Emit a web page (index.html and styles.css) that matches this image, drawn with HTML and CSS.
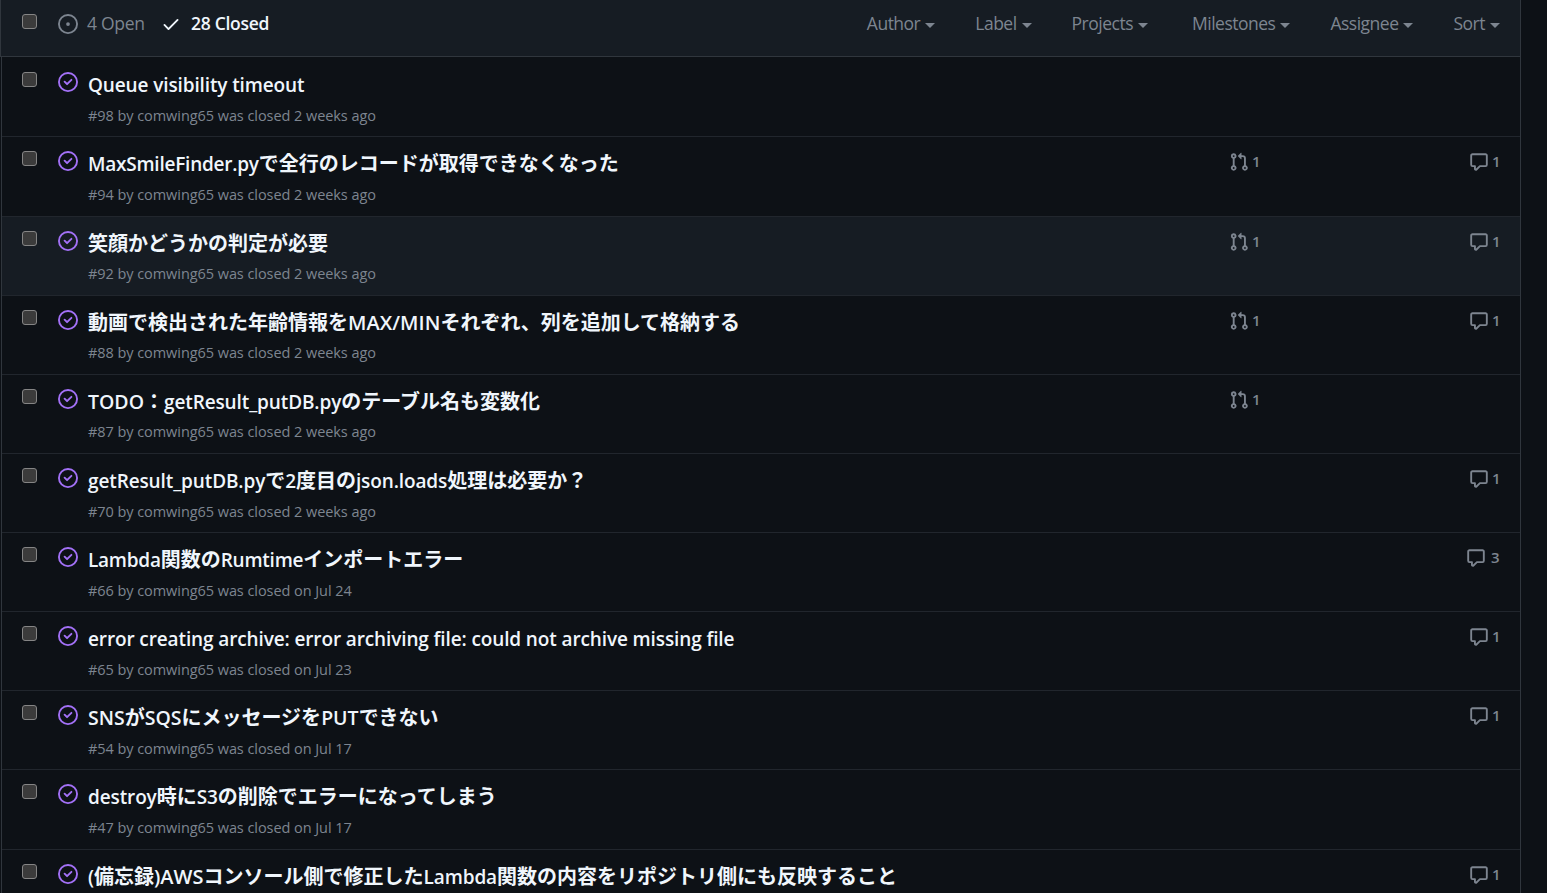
FILE: index.html
```html
<!DOCTYPE html>
<html lang="ja">
  <head>
    <meta charset="UTF-8" />
    <meta name="viewport" content="width=device-width, initial-scale=1.0" />
    <title>Issues</title>
    <link rel="stylesheet" href="styles.css">
  </head>
  <body>
    <!-- icons -->
    <svg class="sprite" width="0" height="0">
      <symbol id="open" viewBox="0 0 16 16">
        <path d="M8 9.5a1.5 1.5 0 100-3 1.5 1.5 0 000 3z" />
        <path fill-rule="evenodd" d="M8 0a8 8 0 100 16A8 8 0 008 0zM1.5 8a6.5 6.5 0 1113 0 6.5 6.5 0 01-13 0z" />
      </symbol>
      <symbol id="check" viewBox="0 0 16 16">
        <path fill-rule="evenodd" d="M13.78 4.22a.75.75 0 010 1.06l-7.25 7.25a.75.75 0 01-1.06 0L2.22 9.28a.75.75 0 011.06-1.06L6 10.94l6.72-6.72a.75.75 0 011.06 0z" />
      </symbol>
      <symbol id="closed" viewBox="0 0 16 16">
        <path d="M11.28 6.78a.75.75 0 00-1.06-1.06L7.25 8.69 5.78 7.22a.75.75 0 00-1.06 1.06l2 2a.75.75 0 001.06 0l3.5-3.5z" />
        <path fill-rule="evenodd" d="M16 8A8 8 0 110 8a8 8 0 0116 0zm-1.5 0a6.5 6.5 0 11-13 0 6.5 6.5 0 0113 0z" />
      </symbol>
      <symbol id="pull" viewBox="0 0 16 16">
        <path fill-rule="evenodd" d="M7.177 3.073L9.573.677A.25.25 0 0110 .854v4.792a.25.25 0 01-.427.177L7.177 3.427a.25.25 0 010-.354zM3.75 2.5a.75.75 0 100 1.5.75.75 0 000-1.5zm-2.25.75a2.25 2.25 0 113 2.122v5.256a2.251 2.251 0 11-1.5 0V5.372A2.25 2.25 0 011.5 3.25zM11 2.5h-1V4h1a1 1 0 011 1v5.628a2.251 2.251 0 101.5 0V5A2.5 2.5 0 0011 2.5zm1 10.25a.75.75 0 111.5 0 .75.75 0 01-1.5 0zM3.75 12a.75.75 0 100 1.5.75.75 0 000-1.5z" />
      </symbol>
      <symbol id="comment" viewBox="0 0 16 16">
        <path fill-rule="evenodd" d="M2.75 2.5a.25.25 0 00-.25.25v7.5c0 .138.112.25.25.25h2a.75.75 0 01.75.75v2.19l2.72-2.72a.75.75 0 01.53-.22h4.5a.25.25 0 00.25-.25v-7.5a.25.25 0 00-.25-.25H2.75zM1 2.75C1 1.784 1.784 1 2.75 1h10.5c.966 0 1.75.784 1.75 1.75v7.5A1.75 1.75 0 0113.25 12H9.06l-2.573 2.573A1.457 1.457 0 014 13.543V12H2.75A1.75 1.75 0 011 10.25v-7.5z" />
      </symbol>
    </svg>

    <div class="issues">
      <div class="header">
        <span class="checkbox"></span>
        <a class="state"><svg class="icon"><use href="#open" /></svg><span class="count-open">4 Open</span></a>
        <a class="state selected"><svg class="icon"><use href="#check" /></svg><span class="count-closed">28 Closed</span></a>
        <div class="filters">
          <span class="filter">Author</span>
          <span class="filter">Label</span>
          <span class="filter">Projects</span>
          <span class="filter milestones">Milestones</span>
          <span class="filter">Assignee</span>
          <span class="filter">Sort</span>
        </div>
      </div>

      <div class="row">
        <span class="checkbox"></span>
        <svg class="icon closed"><use href="#closed" /></svg>
        <div class="content">
          <div class="title"><span class="en">Queue visibility timeout</span></div>
          <div class="meta">#98 by comwing65 was closed 2 weeks ago</div>
        </div>
      </div>

      <div class="row">
        <span class="checkbox"></span>
        <svg class="icon closed"><use href="#closed" /></svg>
        <div class="content">
          <div class="title"><span class="en tight">MaxSmileFinder.py</span>で全行のレコードが取得できなくなった</div>
          <div class="meta">#94 by comwing65 was closed 2 weeks ago</div>
        </div>
        <div class="pulls"><svg class="icon"><use href="#pull" /></svg>1</div>
        <div class="comments"><svg class="icon"><use href="#comment" /></svg>1</div>
      </div>

      <div class="row active">
        <span class="checkbox"></span>
        <svg class="icon closed"><use href="#closed" /></svg>
        <div class="content">
          <div class="title">笑顔かどうかの判定が必要</div>
          <div class="meta">#92 by comwing65 was closed 2 weeks ago</div>
        </div>
        <div class="pulls"><svg class="icon"><use href="#pull" /></svg>1</div>
        <div class="comments"><svg class="icon"><use href="#comment" /></svg>1</div>
      </div>

      <div class="row">
        <span class="checkbox"></span>
        <svg class="icon closed"><use href="#closed" /></svg>
        <div class="content">
          <div class="title">動画で検出された年齢情報を<span class="en caps-wide">MAX/MIN</span>それぞれ、列を追加して格納する</div>
          <div class="meta">#88 by comwing65 was closed 2 weeks ago</div>
        </div>
        <div class="pulls"><svg class="icon"><use href="#pull" /></svg>1</div>
        <div class="comments"><svg class="icon"><use href="#comment" /></svg>1</div>
      </div>

      <div class="row">
        <span class="checkbox"></span>
        <svg class="icon closed"><use href="#closed" /></svg>
        <div class="content">
          <div class="title"><span class="en caps">TODO</span>：<span class="en">getResult_putDB.py</span>のテーブル名も変数化</div>
          <div class="meta">#87 by comwing65 was closed 2 weeks ago</div>
        </div>
        <div class="pulls"><svg class="icon"><use href="#pull" /></svg>1</div>
        <div class="comments"></div>
      </div>

      <div class="row">
        <span class="checkbox"></span>
        <svg class="icon closed"><use href="#closed" /></svg>
        <div class="content">
          <div class="title"><span class="en">getResult_putDB.py</span>で<span class="en">2</span>度目の<span class="en">json.loads</span>処理は必要か？</div>
          <div class="meta">#70 by comwing65 was closed 2 weeks ago</div>
        </div>
        <div class="comments"><svg class="icon"><use href="#comment" /></svg>1</div>
      </div>

      <div class="row">
        <span class="checkbox"></span>
        <svg class="icon closed"><use href="#closed" /></svg>
        <div class="content">
          <div class="title"><span class="en tight">Lambda</span>関数の<span class="en tight">Rumtime</span>インポートエラー</div>
          <div class="meta">#66 by comwing65 was closed on Jul 24</div>
        </div>
        <div class="comments wide"><svg class="icon"><use href="#comment" /></svg>3</div>
      </div>

      <div class="row">
        <span class="checkbox"></span>
        <svg class="icon closed"><use href="#closed" /></svg>
        <div class="content">
          <div class="title"><span class="en">error creating archive: error archiving file: could not archive missing file</span></div>
          <div class="meta">#65 by comwing65 was closed on Jul 23</div>
        </div>
        <div class="comments"><svg class="icon"><use href="#comment" /></svg>1</div>
      </div>

      <div class="row">
        <span class="checkbox"></span>
        <svg class="icon closed"><use href="#closed" /></svg>
        <div class="content">
          <div class="title"><span class="en caps">SNS</span>が<span class="en caps">SQS</span>にメッセージを<span class="en caps">PUT</span>できない</div>
          <div class="meta">#54 by comwing65 was closed on Jul 17</div>
        </div>
        <div class="comments"><svg class="icon"><use href="#comment" /></svg>1</div>
      </div>

      <div class="row">
        <span class="checkbox"></span>
        <svg class="icon closed"><use href="#closed" /></svg>
        <div class="content">
          <div class="title"><span class="en">destroy</span>時に<span class="en">S3</span>の削除でエラーになってしまう</div>
          <div class="meta">#47 by comwing65 was closed on Jul 17</div>
        </div>
      </div>

      <div class="row">
        <span class="checkbox"></span>
        <svg class="icon closed"><use href="#closed" /></svg>
        <div class="content">
          <div class="title"><span class="en">(</span>備忘録<span class="en caps-wide">)AWS</span>コンソール側で修正した<span class="en">Lambda</span>関数の内容をリポジトリ側にも反映すること</div>
        </div>
        <div class="comments"><svg class="icon"><use href="#comment" /></svg>1</div>
      </div>
    </div>
  </body>
</html>
```
FILE: styles.css
```css
* {
  box-sizing: border-box;
}

body {
  margin: 0;
  height: 893px;
  overflow: hidden;
  background-color: #0d1116;
  color: #7d8590;
  font-family: "Open Sans", "Noto Sans CJK JP", sans-serif;
}

.sprite {
  position: absolute;
}

.issues {
  width: 1520px;
  margin-left: 1px;
  border-left: 1px solid #30363d;
  border-right: 1px solid #30363d;
}

.icon {
  display: block;
  flex: none;
  width: 20px;
  height: 20px;
  fill: currentColor;
}

.checkbox {
  flex: none;
  width: 15px;
  height: 15px;
  margin-right: 21px;
  background-color: #3b3b3b;
  border: 1px solid #858585;
  border-radius: 3px;
}

.header {
  display: flex;
  height: 57.27px;
  margin-left: -2px;
  padding: 14px 20px 0 21px;
  background-color: #161c23;
  border-left: 1px solid #30363d;
  border-bottom: 1px solid #30363d;
  font-size: 17.5px;
  line-height: 20px;
}

.state {
  display: flex;
  margin-right: 16px;
}

.state .icon {
  margin-right: 9px;
}

.selected {
  color: #f0f6fc;
  font-weight: 600;
}

.selected .icon {
  margin-right: 10px;
}

.count-open,
.count-closed {
  margin-top: -1px;
  white-space: nowrap;
}

.count-open {
  width: 58px;
  letter-spacing: -0.3px;
}

.count-closed {
  letter-spacing: -0.3px;
}

.filters {
  display: flex;
  flex: 1;
  justify-content: flex-end;
  gap: 40px;
  margin-top: -1px;
}

.filter {
  display: flex;
  align-items: center;
  height: 20px;
  letter-spacing: -0.5px;
}

.filter::after {
  content: "";
  margin: 4px 0 0 5px;
  border: 5px solid transparent;
  border-top-color: currentColor;
  border-bottom: 0;
}

.milestones {
  margin-left: 4px;
}

.row {
  display: flex;
  height: 79.13px;
  padding: 14px 20px 0;
  border-top: 1px solid #21262d;
}

.header + .row {
  padding-top: 15px;
  border-top: 0;
}

.active {
  background-color: #161c23;
}

.closed {
  margin-right: 10px;
  color: #a371f7;
}

.content {
  flex: 1;
}

.title {
  height: 30px;
  color: #f0f6fc;
  font-size: 20px;
  font-weight: 600;
  line-height: 26px;
  white-space: nowrap;
}

.title .en {
  font-size: 19px;
  letter-spacing: -0.12px;
}

.title .tight {
  letter-spacing: -0.24px;
}

.title .caps {
  font-size: 19.5px;
  letter-spacing: 0;
}

.title .caps-wide {
  font-size: 20px;
  letter-spacing: 0.05px;
}

.meta {
  margin-top: -0.35px;
  font-size: 14.5px;
  line-height: 28px;
  letter-spacing: -0.06px;
}

.pulls,
.comments {
  display: flex;
  gap: 3px;
  height: 20px;
  font-size: 15px;
  font-weight: 600;
  line-height: 20px;
}

.pulls .icon,
.comments .icon {
  margin-top: 1px;
}

.pulls {
  width: 240px;
}

.comments {
  width: 31px;
}

.wide {
  gap: 5px;
  width: 34px;
}
```
